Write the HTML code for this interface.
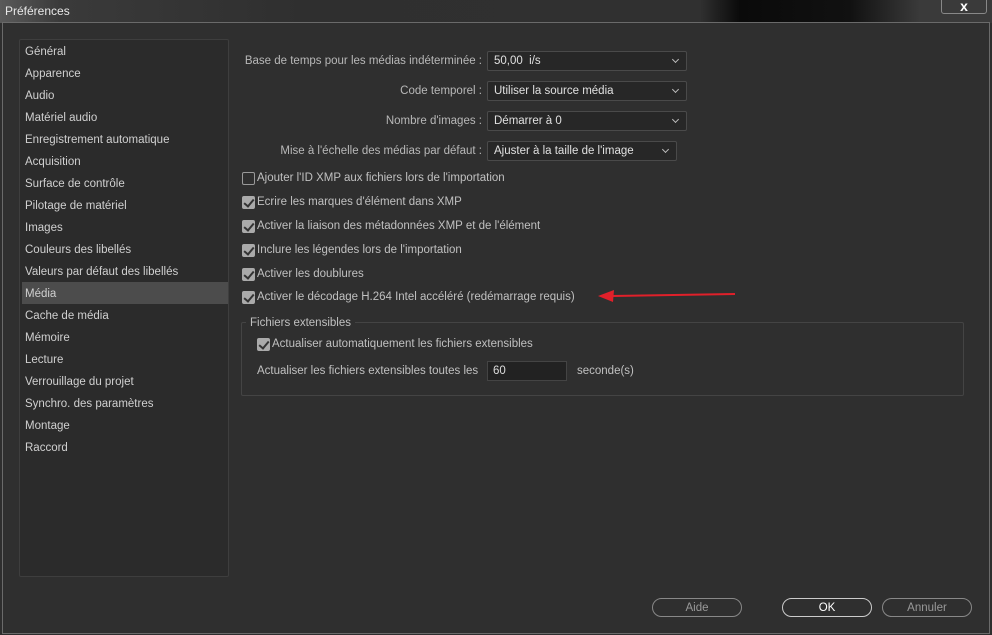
<!DOCTYPE html>
<html><head><meta charset="utf-8"><style>
*{margin:0;padding:0;box-sizing:border-box}
body{width:992px;height:635px;overflow:hidden;background:#2e2e2e;font-family:"Liberation Sans",sans-serif;font-size:11.5px;color:#c8c8c8;position:relative}
.title{position:absolute;left:0;top:0;width:992px;height:23px;background:linear-gradient(90deg,#5a5a5a 0,#3a3a3a 60px,#2f2f2f 300px,#303030 700px,#0a0a0a 740px,#111 850px,#3a3a3a 920px,#3a3a3a 992px)}
.title span{position:absolute;left:5px;top:4px;color:#e8e8e8;font-size:12px}
.close{position:absolute;left:941px;top:-4px;width:46px;height:18px;border:1px solid #888;border-radius:3px;color:#fff;font-weight:bold;text-align:center;font-size:14px;line-height:18px}
.win{position:absolute;left:2px;top:22px;width:988px;height:612px;border:1px solid #6a6a6a;background:#2f2f2f}
.side{position:absolute;left:19px;top:39px;width:210px;height:538px;border:1px solid #3e3e3e;background:#2b2b2b;border-radius:2px}
.side div{position:absolute;left:2px;width:206px;height:22px;line-height:24px;padding-left:3px;color:#d0d0d0}
.side .sel{background:#4c4c4c}
.lbl{position:absolute;text-align:right;color:#b8b8b8;white-space:nowrap}
.dd{position:absolute;height:20px;border:1px solid #4a4a4a;background:#272727;border-radius:2px;color:#e0e0e0;padding-left:6px;line-height:19px}
.dd:after{content:"";position:absolute;right:8px;top:5px;width:4px;height:4px;border-right:1px solid #bbb;border-bottom:1px solid #bbb;transform:rotate(45deg)}
.cb{position:absolute;white-space:nowrap;color:#c0c0c0}
.cb i{position:absolute;left:0;top:0;width:13px;height:13px;border-radius:2px;background:#aaa}
.cb i.off{background:transparent;border:1px solid #999}
.cb i:not(.off):after{content:"";position:absolute;left:4px;top:1px;width:4px;height:8px;border-right:2px solid #333;border-bottom:2px solid #333;transform:rotate(40deg)}
.cb span{position:absolute;left:15px;top:0}
.grp{position:absolute;left:241px;top:322px;width:723px;height:74px;border:1px solid #444;border-radius:2px}
.btn{position:absolute;top:598px;height:19px;border:1px solid #888;border-radius:10px;text-align:center;line-height:18px;color:#999}
</style></head><body>
<div class="title"><span>Préférences</span></div>
<div class="close">x</div>
<div class="win"></div>
<div class="side">
<div style="top:0">Général</div><div style="top:22px">Apparence</div><div style="top:44px">Audio</div><div style="top:66px">Matériel audio</div><div style="top:88px">Enregistrement automatique</div><div style="top:110px">Acquisition</div><div style="top:132px">Surface de contrôle</div><div style="top:154px">Pilotage de matériel</div><div style="top:176px">Images</div><div style="top:198px">Couleurs des libellés</div><div style="top:220px">Valeurs par défaut des libellés</div><div class="sel" style="top:242px">Média</div><div style="top:264px">Cache de média</div><div style="top:286px">Mémoire</div><div style="top:308px">Lecture</div><div style="top:330px">Verrouillage du projet</div><div style="top:352px">Synchro. des paramètres</div><div style="top:374px">Montage</div><div style="top:396px">Raccord</div>
</div>
<div class="lbl" style="right:510px;top:55px">Base de temps pour les médias indéterminée :</div>
<div class="dd" style="left:487px;top:51px;width:200px">50,00&nbsp; i/s</div>
<div class="lbl" style="right:510px;top:85px">Code temporel :</div>
<div class="dd" style="left:487px;top:81px;width:200px">Utiliser la source média</div>
<div class="lbl" style="right:510px;top:115px">Nombre d'images :</div>
<div class="dd" style="left:487px;top:111px;width:200px">Démarrer à 0</div>
<div class="lbl" style="right:510px;top:145px">Mise à l'échelle des médias par défaut :</div>
<div class="dd" style="left:487px;top:141px;width:190px">Ajuster à la taille de l'image</div>
<div class="cb" style="left:242px;top:172px"><i class="off"></i><span>Ajouter l'ID XMP aux fichiers lors de l'importation</span></div>
<div class="cb" style="left:242px;top:196px"><i></i><span>Ecrire les marques d'élément dans XMP</span></div>
<div class="cb" style="left:242px;top:220px"><i></i><span>Activer la liaison des métadonnées XMP et de l'élément</span></div>
<div class="cb" style="left:242px;top:244px"><i></i><span>Inclure les légendes lors de l'importation</span></div>
<div class="cb" style="left:242px;top:268px"><i></i><span>Activer les doublures</span></div>
<div class="cb" style="left:242px;top:291px"><i></i><span>Activer le décodage H.264 Intel accéléré (redémarrage requis)</span></div>
<svg style="position:absolute;left:598px;top:288px" width="140" height="16"><line x1="14" y1="8" x2="137" y2="6" stroke="#e0202a" stroke-width="2"/><polygon points="0,8 16,2 15,14" fill="#e0202a"/></svg>
<div class="grp"></div>
<div style="position:absolute;left:246px;top:317px;padding:0 4px;background:#2f2f2f;color:#c0c0c0">Fichiers extensibles</div>
<div class="cb" style="left:257px;top:338px"><i></i><span>Actualiser automatiquement les fichiers extensibles</span></div>
<div style="position:absolute;left:257px;top:365px;color:#c0c0c0">Actualiser les fichiers extensibles toutes les</div>
<div style="position:absolute;left:487px;top:361px;width:80px;height:20px;border:1px solid #444;background:#222;color:#ddd;padding-left:5px;line-height:19px">60</div>
<div style="position:absolute;left:577px;top:365px;color:#c0c0c0">seconde(s)</div>
<div class="btn" style="left:652px;width:90px">Aide</div>
<div class="btn" style="left:782px;width:90px;color:#fff;border-color:#ccc">OK</div>
<div class="btn" style="left:882px;width:90px">Annuler</div>
</body></html>
